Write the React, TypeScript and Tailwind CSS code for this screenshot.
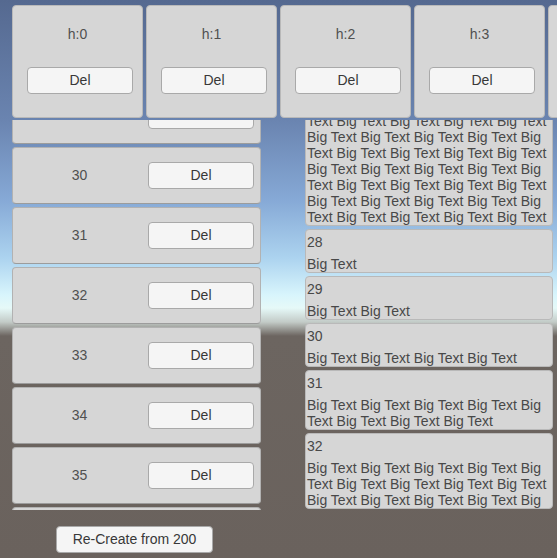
import React from 'react';

const LINE_A = 'Big Text Big Text Big Text Big Text Big';
const LINE_B = 'Text Big Text Big Text Big Text Big Text';

const Btn: React.FC<{ label: string; className?: string }> = ({ label, className = '' }) => (
  <button
    className={`h-[27px] rounded-[4px] border border-[#a9a9a9] bg-[#f5f5f5] text-[14px] text-[#383838] flex items-center justify-center ${className}`}
  >
    {label}
  </button>
);

const TextCard: React.FC<{ n: number; lines: string[] }> = ({ n, lines }) => (
  <div className="shrink-0 rounded-[4px] border border-[#b9b9b9] bg-[#d6d6d6] pl-[1px] pt-[4px] text-[14px] leading-[16px] text-[#484848]">
    <div className="h-[16px]">{n}</div>
    <div className="mt-[6px]">
      {lines.map((l, i) => (
        <div key={i} className="whitespace-nowrap">{l}</div>
      ))}
    </div>
  </div>
);

const App: React.FC = () => {
  const heads = [0, 1, 2, 3, 4];
  const rows = [29, 30, 31, 32, 33, 34, 35, 36];
  const alt = (count: number) => Array.from({ length: count }, (_, i) => (i % 2 === 0 ? LINE_A : LINE_B));

  return (
    <div className="w-[557px] h-[558px] overflow-hidden font-['Liberation_Sans',Arial,sans-serif] bg-[linear-gradient(to_bottom,#556990_0px,#6a84b0_120px,#86a9d6_200px,#acd3ef_258px,#d8f5fc_295px,#e6f9f8_308px,#c3cbc7_322px,#6c6560_336px,#6a625d_558px)]">
      {/* header strip */}
      <div className="flex gap-[3px] pl-[12px] pt-[5px] h-[118px] overflow-hidden">
        {heads.map((h) => (
          <div
            key={h}
            className="w-[131px] h-[113px] shrink-0 rounded-[4px] border border-[#b9b9b9] bg-[#d6d6d6] flex flex-col"
          >
            <div className="mt-[20px] h-[16px] text-center text-[14px] leading-[16px] text-[#505050]">h:{h}</div>
            <Btn label="Del" className="mt-[25px] ml-[14px] w-[106px]" />
          </div>
        ))}
      </div>

      {/* scroll lists */}
      <div className="mt-[2px] h-[390px] flex overflow-hidden">
        <div className="ml-[12px] w-[249px] overflow-hidden">
          <div className="-mt-[33px] flex flex-col gap-[3px]">
            {rows.map((r) => (
              <div
                key={r}
                className="h-[57px] shrink-0 rounded-[4px] border border-[#b2b2b2] border-b-[#9c9c9c] bg-[#d6d6d6] flex items-center"
              >
                <div className="w-[133px] text-center text-[14px] text-[#505050]">{r}</div>
                <Btn label="Del" className="ml-[2px] w-[106px]" />
              </div>
            ))}
          </div>
        </div>

        <div className="ml-[44px] w-[248px] overflow-hidden">
          <div className="-mt-[114px] flex flex-col gap-[3px]">
            <TextCard n={27} lines={alt(12)} />
            <TextCard n={28} lines={['Big Text']} />
            <TextCard n={29} lines={['Big Text Big Text']} />
            <TextCard n={30} lines={['Big Text Big Text Big Text Big Text']} />
            <TextCard n={31} lines={[LINE_A, 'Text Big Text Big Text Big Text']} />
            <TextCard n={32} lines={alt(3)} />
          </div>
        </div>
      </div>

      <div className="mt-[16px] ml-[56px]">
        <Btn label="Re-Create from 200" className="w-[157px]" />
      </div>
    </div>
  );
};

export default App;
